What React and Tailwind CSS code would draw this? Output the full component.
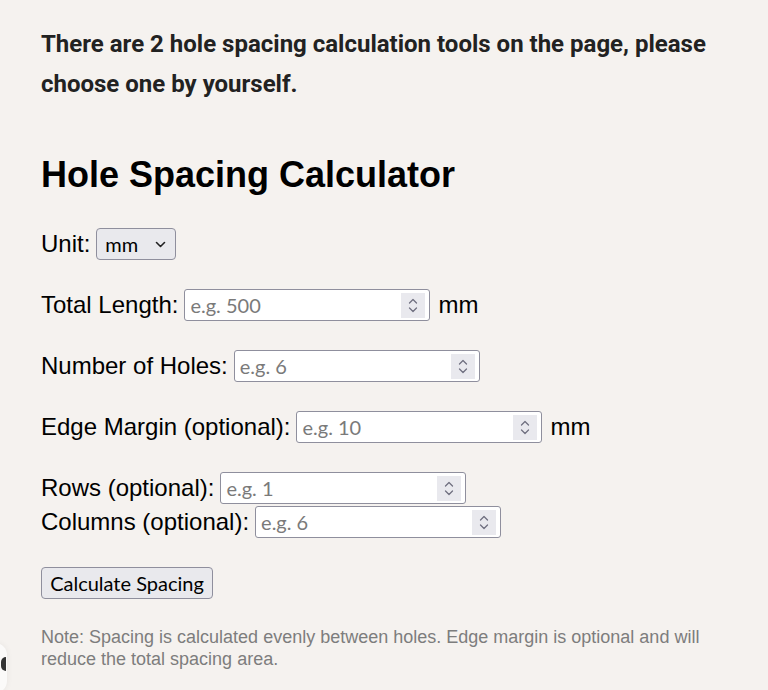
import React from "react";

const ctrlFont = { fontFamily: "Lato, 'Open Sans', sans-serif" };

function Spinner() {
  return (
    <div className="flex h-[25px] w-[24px] flex-col items-center justify-center gap-[3px] bg-[#e9e9ee]">
      <svg width="10" height="6" viewBox="0 0 10 6" fill="none">
        <path d="M1.5 5L5 1.5L8.5 5" stroke="#707080" strokeWidth="1.3" strokeLinecap="round" strokeLinejoin="round" />
      </svg>
      <svg width="10" height="6" viewBox="0 0 10 6" fill="none">
        <path d="M1.5 1L5 4.5L8.5 1" stroke="#707080" strokeWidth="1.3" strokeLinecap="round" strokeLinejoin="round" />
      </svg>
    </div>
  );
}

function NumberBox({ placeholder }) {
  return (
    <div className="flex h-[32px] w-[246px] items-center rounded-[3px] border border-[#8f8f9d] bg-white pl-[5px] pr-[4px]">
      <input
        type="text"
        placeholder={placeholder}
        className="min-w-0 flex-1 bg-transparent text-[20px] leading-[24px] text-black outline-none placeholder:text-[#7a7a7a]"
        style={ctrlFont}
      />
      <Spinner />
    </div>
  );
}

function Row({ label, placeholder, unit, className = "" }) {
  return (
    <div className={"flex items-center " + className}>
      <span className="mr-[6px] text-[24px] leading-[28px] text-black">{label}</span>
      <NumberBox placeholder={placeholder} />
      {unit && <span className="ml-[8px] text-[24px] leading-[28px] text-black">{unit}</span>}
    </div>
  );
}

export default function App() {
  return (
    <div
      className="relative min-h-[690px] w-full overflow-hidden bg-[#f5f2ef] px-[41px] pt-[24px]"
      style={{ fontFamily: "'Liberation Sans', Arial, sans-serif" }}
    >
      <p
        className="text-[24px] font-bold leading-[40px] text-[#222]"
        style={{ fontFamily: "Roboto, 'Liberation Sans', sans-serif" }}
      >
        There are 2 hole spacing calculation tools on the page, please choose one by yourself.
      </p>

      <h2 className="mt-[50px] text-[36px] font-bold leading-[41px] text-black">Hole Spacing Calculator</h2>

      <div className="mt-[33px] flex items-center">
        <span className="mr-[6px] text-[24px] leading-[28px] text-black">Unit:</span>
        <div className="flex h-[32px] w-[80px] items-center justify-between rounded-[4px] border border-[#8f8f9d] bg-[#e9e9ed] pl-[8px] pr-[9px]">
          <span className="text-[20px] leading-[24px] text-black" style={ctrlFont}>mm</span>
          <svg width="11" height="7" viewBox="0 0 11 7" fill="none">
            <path d="M1.5 1.5L5.5 5.5L9.5 1.5" stroke="#222" strokeWidth="1.6" strokeLinecap="round" strokeLinejoin="round" />
          </svg>
        </div>
      </div>

      <Row label="Total Length:" placeholder="e.g. 500" unit="mm" className="mt-[29px]" />
      <Row label="Number of Holes:" placeholder="e.g. 6" className="mt-[29px]" />
      <Row label="Edge Margin (optional):" placeholder="e.g. 10" unit="mm" className="mt-[29px]" />
      <Row label="Rows (optional):" placeholder="e.g. 1" className="mt-[29px]" />
      <Row label="Columns (optional):" placeholder="e.g. 6" className="mt-[2px]" />

      <button
        className="mt-[29px] flex h-[32px] w-[172px] items-center justify-center rounded-[4px] border border-[#8f8f9d] bg-[#e9e9ed] text-[20px] leading-[24px] text-black"
        style={ctrlFont}
      >
        Calculate Spacing
      </button>

      <p className="mt-[27px] max-w-[686px] text-[18px] leading-[22px] text-[#7d7d7d]">
        Note: Spacing is calculated evenly between holes. Edge margin is optional and will reduce the total spacing area.
      </p>

      <div className="absolute left-[-30px] top-[643px] flex h-[50px] w-[37px] items-start justify-end rounded-[12px] bg-[#fbfaf9] pt-[14px] shadow-[0_0_6px_rgba(0,0,0,0.06)]">
        <span className="mr-[1px] h-[14px] w-[5px] rounded-l-full bg-[#333]"></span>
      </div>
    </div>
  );
}
